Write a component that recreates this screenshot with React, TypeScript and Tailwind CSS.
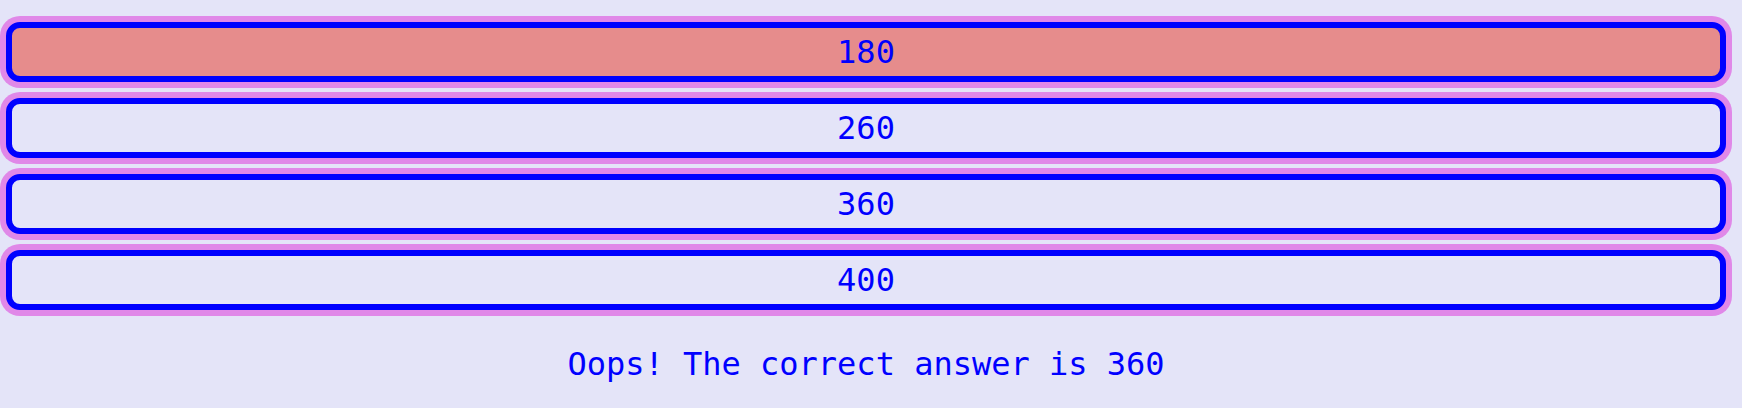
const options = [180, 260, 360, 400];

const App = () => {
  const picked = 180;
  const answer = 360;

  return (
    <div
      className="min-h-[408px] w-full bg-[#e4e4f8] pl-[6px] pr-[16px] pt-[22px]"
      style={{ fontFamily: '"DejaVu Sans Mono", "Liberation Mono", monospace' }}
    >
      <div className="flex flex-col gap-4">
        {options.map((opt) => (
          <button
            key={opt}
            className={`h-[60px] w-full rounded-[14px] border-[6px] border-[#0000ff] text-[32px] leading-none text-[#0000ff] shadow-[0_0_0_6px_#e088e8] ${
              opt === picked ? "bg-[#e68c8c]" : "bg-[#e4e4f8]"
            }`}
          >
            {opt}
          </button>
        ))}
      </div>

      <p className="mt-[34px] text-center text-[32px] leading-[40px] text-[#0000ff]">
        Oops! The correct answer is {answer}
      </p>
    </div>
  );
};

export default App;
